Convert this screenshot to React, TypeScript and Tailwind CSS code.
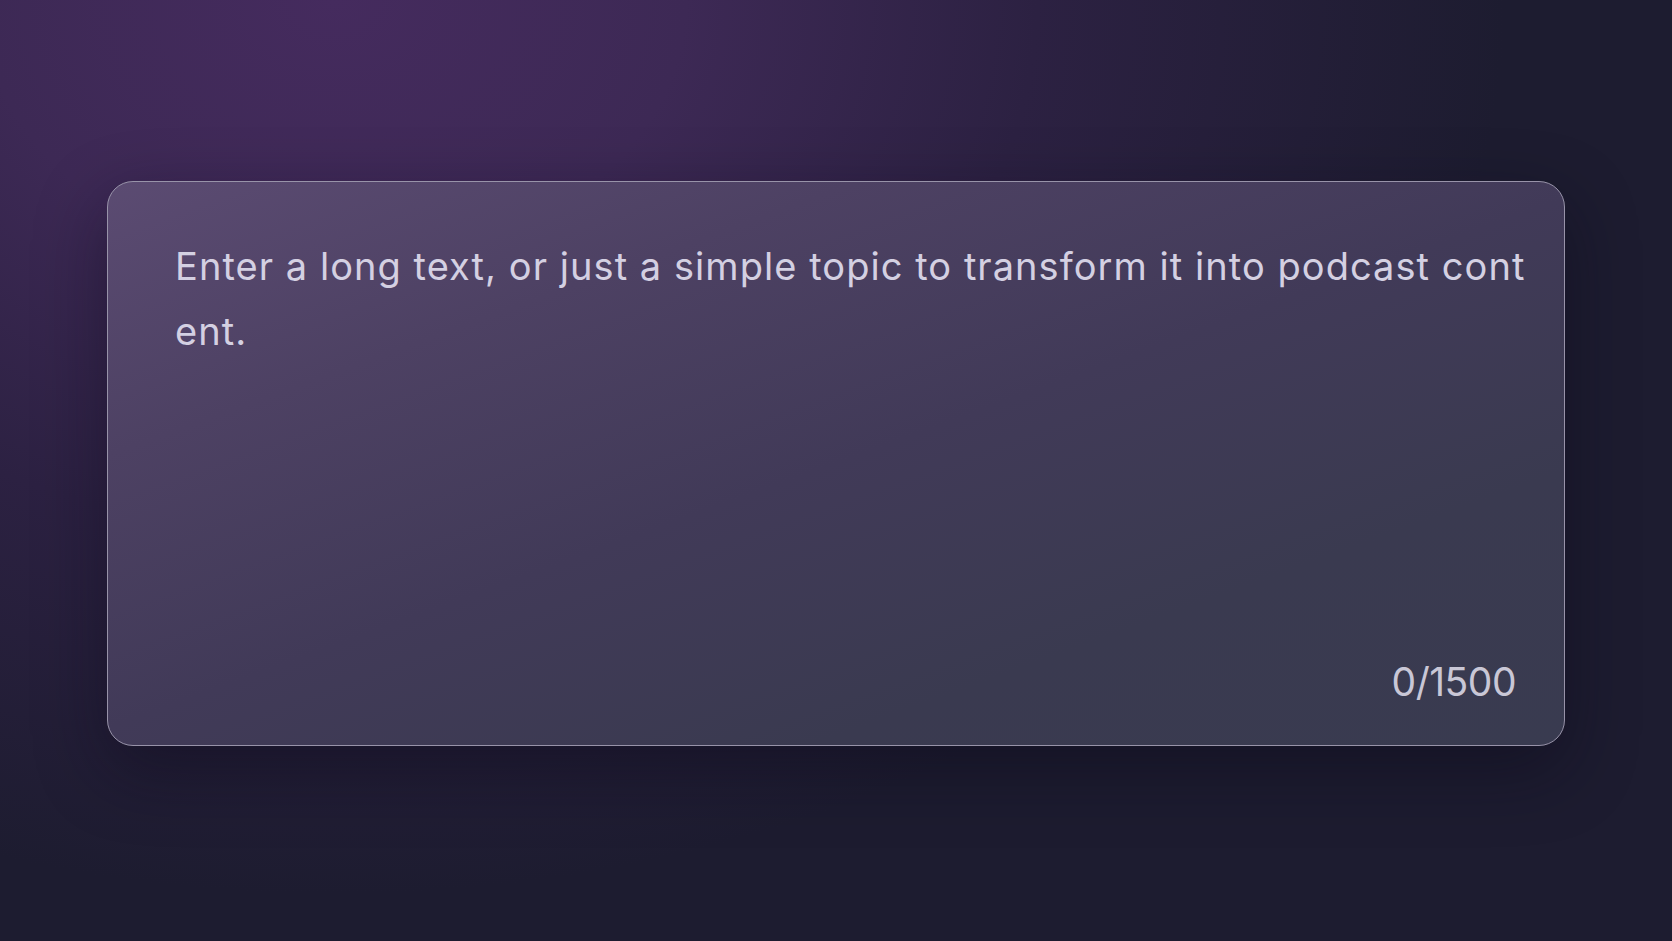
export default function App() {
  return (
    <div className="min-h-[941px] w-full bg-[#1d1c30] bg-[radial-gradient(ellipse_70%_95%_at_20%_0%,#452b5e_0%,#3d2955_30%,#2c2142_60%,#1d1c30_100%)] px-[107px] pt-[181px] pb-[195px]" style={{ fontFamily: 'Inter, "Noto Sans", sans-serif' }}>
      <div className="flex h-[565px] w-full flex-col rounded-[26px] border border-[#9893a9] bg-[linear-gradient(160deg,#5b4b72_0%,#4d4163_25%,#413a58_50%,#3a3a50_75%,#393b50_100%)] pl-[67px] pr-[30px] pt-[52px] pb-[38px] shadow-[0_24px_70px_rgba(10,8,25,0.45)]">
        <div className="flex-1 break-all text-[38px] leading-[65px] tracking-[1.05px] text-[#d4d0e2]">
          Enter a long text, or just a simple topic to transform it into podcast content.
        </div>
        <div className="self-end pr-[18px] text-[39px] leading-[50px] tracking-[-0.5px] text-[#c9c7d6]">0/1500</div>
      </div>
    </div>
  );
}
